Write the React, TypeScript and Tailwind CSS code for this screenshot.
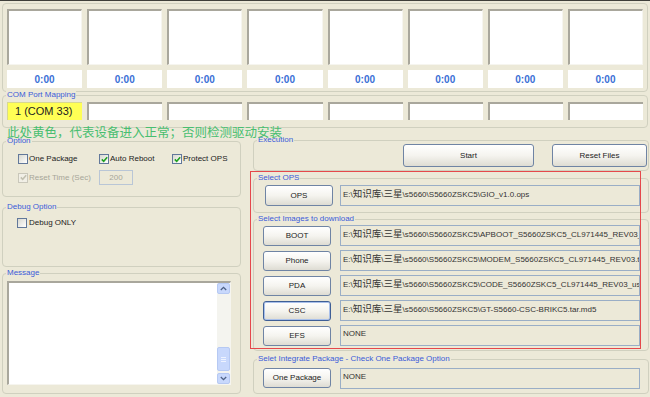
import React from "react";

function Group({
  label,
  className,
  children,
}: {
  label?: string;
  className: string;
  children?: React.ReactNode;
}) {
  return (
    <div className={`relative border border-[#d0d0bf] rounded-[4px] ${className}`}>
      {label && (
        <span className="absolute -top-[6px] left-[3px] px-[1px] bg-[#ECE9D8] text-[8px] leading-[10px] text-[#3b5bd8] whitespace-nowrap">
          {label}
        </span>
      )}
      {children}
    </div>
  );
}

function Check({ checked, disabled }: { checked?: boolean; disabled?: boolean }) {
  return (
    <span
      className={`flex items-center justify-center w-[10px] h-[10px] shrink-0 border ${
        disabled ? "border-[#c9c7ba] bg-[#f1efe6]" : "border-[#62789a] bg-gradient-to-br from-[#d8d8d0] to-white"
      }`}
    >
      {checked && (
        <svg width="7" height="7" viewBox="0 0 7 7">
          <path
            d="M0.8 3.4 L2.7 5.3 L6.2 1.3"
            stroke={disabled ? "#c2c0b0" : "#21a121"}
            strokeWidth="1.6"
            fill="none"
          />
        </svg>
      )}
    </span>
  );
}

function Btn({ children, className }: { children: React.ReactNode; className: string }) {
  return (
    <div
      className={`flex items-center justify-center shrink-0 rounded-[3px] border bg-gradient-to-b from-white via-[#f5f4ef] to-[#dedcd3] text-[8px] text-[#222] ${className}`}
    >
      {children}
    </div>
  );
}

function PathText({ text }: { text: string }) {
  const parts = text.split(/([\u4e00-\u9fff]+)/);
  return (
    <>
      {parts.map((p, i) =>
        /[\u4e00-\u9fff]/.test(p) ? (
          <span key={i} className="text-[9.5px]">
            {p}
          </span>
        ) : (
          <span key={i}>{p}</span>
        )
      )}
    </>
  );
}

function Field({ text }: { text: string }) {
  return (
    <div className="w-[300px] h-[21px] shrink-0 border border-[#9aaec6] pl-[2px] pt-[2px] text-[8px] leading-[11px] text-[#333] whitespace-nowrap overflow-hidden">
      <PathText text={text} />
    </div>
  );
}

const base = "E:\\知识库\\三星\\s5660\\S5660ZSKC5\\";

function Arrow({ up }: { up?: boolean }) {
  return (
    <div className="h-[11px] flex items-center justify-center rounded-[2px] border border-[#b6c9f3] bg-[#c8d8fc]">
      <svg width="7" height="5" viewBox="0 0 7 5">
        <path
          d={up ? "M0.8 4 L3.5 1.3 L6.2 4" : "M0.8 1 L3.5 3.7 L6.2 1"}
          stroke="#4d6185"
          strokeWidth="1.3"
          fill="none"
        />
      </svg>
    </div>
  );
}

export default function App() {
  const cols = [0, 1, 2, 3, 4, 5, 6, 7];
  return (
    <div className="relative w-[650px] h-[397px] overflow-hidden bg-[#ECE9D8] font-['Liberation_Sans','Noto_Sans_CJK_SC',sans-serif]">
      <div className="h-[1px] bg-[#3f3f3a]" />

      {/* status group */}
      <Group className="mt-[2px] ml-[2px] w-[646px] h-[89px] pl-[4px] pt-[5px]">
        <div className="grid grid-cols-8 gap-x-[5px] w-[636px]">
          {cols.map((c) => (
            <div key={c} className="flex flex-col gap-[5px]">
              <div className="h-[56px] bg-white border-t-2 border-l-2 border-t-[#a9a79c] border-l-[#a9a79c] border-r border-b border-r-[#f6f5ef] border-b-[#f6f5ef]" />
              <div className="h-[18px] bg-white flex items-center justify-center text-[10px] font-bold text-[#3a6fd6]">
                0:00
              </div>
            </div>
          ))}
        </div>
      </Group>

      {/* COM port mapping */}
      <Group label="COM Port Mapping" className="mt-[3px] ml-[2px] w-[646px] h-[33px] pl-[4px] pt-[6px]">
        <div className="grid grid-cols-8 gap-x-[5px] w-[636px]">
          {cols.map((c) =>
            c === 0 ? (
              <div
                key={c}
                className="h-[18px] bg-[#ffff55] border-t border-l border-[#d8d890] pl-[7px] flex items-center text-[11px] text-[#222]"
              >
                1 (COM 33)
              </div>
            ) : (
              <div
                key={c}
                className="h-[18px] bg-white border-t-2 border-l-2 border-t-[#a9a79c] border-l-[#a9a79c]"
              />
            )
          )}
        </div>
      </Group>

      <div className="flex">
        {/* left column */}
        <div className="ml-[2px] w-[239px] flex flex-col">
          <Group label="Option" className="mt-[13px] h-[56px] pl-[15px] pt-[11px]">
            <div className="flex items-center h-[12px] text-[8px] text-[#222]">
              <div className="w-[81px] flex items-center gap-[1px]">
                <Check />
                <span>One Package</span>
              </div>
              <div className="w-[73px] flex items-center gap-[1px]">
                <Check checked />
                <span>Auto Reboot</span>
              </div>
              <div className="flex items-center gap-[1px]">
                <Check checked />
                <span>Protect OPS</span>
              </div>
            </div>
            <div className="flex items-center h-[15px] mt-[5px] text-[8px] text-[#a7a698]">
              <div className="w-[81px] flex items-center gap-[1px]">
                <Check checked disabled />
                <span>Reset Time (Sec)</span>
              </div>
              <div className="w-[34px] h-[15px] border border-[#b9c6d6] flex items-center justify-center">
                200
              </div>
            </div>
          </Group>

          <Group label="Debug Option" className="mt-[10px] h-[60px] pl-[14px] pt-[9px]">
            <div className="flex items-center h-[12px] gap-[2px] text-[8px] text-[#222]">
              <Check />
              <span>Debug ONLY</span>
            </div>
          </Group>

          <Group label="Message" className="mt-[6px] h-[121px] pl-[4px] pt-[7px]">
            <div className="w-[224px] h-[104px] bg-white border-t-2 border-l-2 border-t-[#a9a79c] border-l-[#a9a79c] border-r border-b border-r-[#f6f5ef] border-b-[#f6f5ef] flex justify-end">
              <div className="w-[13px] h-full flex flex-col bg-[#f4f4ef]">
                <Arrow up />
                <div className="flex-1 flex flex-col justify-end pb-[2px]">
                  <div className="h-[24px] rounded-[2px] border border-[#b6c9f3] bg-[#c8d8fc] flex flex-col items-center justify-center gap-[1px]">
                    <div className="w-[5px] h-[1px] bg-[#eef3ff]" />
                    <div className="w-[5px] h-[1px] bg-[#eef3ff]" />
                    <div className="w-[5px] h-[1px] bg-[#eef3ff]" />
                  </div>
                </div>
                <Arrow />
              </div>
            </div>
          </Group>
        </div>

        {/* right column */}
        <div className="ml-[12px] w-[396px] flex flex-col">
          <Group label="Execution" className="mt-[12px] h-[31px] pt-[3px] pr-[1px]">
            <div className="flex justify-end gap-[18px]">
              <Btn className="w-[131px] h-[23px] border-[#6f84a4]">Start</Btn>
              <Btn className="w-[95px] h-[23px] border-[#6f84a4]">Reset Files</Btn>
            </div>
          </Group>

          <Group label="Select OPS" className="mt-[7px] h-[35px] pl-[11px] pt-[6px]">
            <div className="flex items-start gap-[7px]">
              <Btn className="w-[68px] h-[21px] border-[#6f84a4]">OPS</Btn>
              <Field text={base + "GIO_v1.0.ops"} />
            </div>
          </Group>

          <Group label="Select Images to download" className="mt-[6px] h-[132px] pl-[9px] pt-[5px]">
            <div className="flex flex-col gap-[4px]">
              {[
                ["BOOT", base + "APBOOT_S5660ZSKC5_CL971445_REV03_user_low_ship.tar.md5", false],
                ["Phone", base + "MODEM_S5660ZSKC5_CL971445_REV03.tar.md5", false],
                ["PDA", base + "CODE_S5660ZSKC5_CL971445_REV03_user_low_ship.tar.md5", false],
                ["CSC", base + "GT-S5660-CSC-BRIKC5.tar.md5", true],
                ["EFS", "NONE", false],
              ].map(([name, path, focus]) => (
                <div key={name as string} className="flex items-center gap-[9px] h-[21px]">
                  <Btn
                    className={
                      focus
                        ? "w-[68px] h-[20px] border-[#3f5f96] shadow-[inset_0_0_0_1px_#a9c0ea]"
                        : "w-[68px] h-[20px] border-[#6f84a4]"
                    }
                  >
                    {name as string}
                  </Btn>
                  <Field text={path as string} />
                </div>
              ))}
            </div>
          </Group>

          <Group
            label="Selet Integrate Package - Check One Package Option"
            className="mt-[8px] h-[35px] pl-[9px] pt-[8px]"
          >
            <div className="flex items-start gap-[9px]">
              <Btn className="w-[68px] h-[20px] border-[#6f84a4]">One Package</Btn>
              <Field text="NONE" />
            </div>
          </Group>
        </div>
      </div>

      {/* annotation overlays */}
      <div className="absolute left-[7px] top-[124px] text-[12.5px] leading-[16px] text-[#48be70] whitespace-nowrap font-['Noto_Sans_CJK_SC',sans-serif]">
        此处黄色，代表设备进入正常；否则检测驱动安装
      </div>
      <div className="absolute left-[250px] top-[171px] w-[391px] h-[178px] border border-[#e5484b] pointer-events-none" />
    </div>
  );
}
